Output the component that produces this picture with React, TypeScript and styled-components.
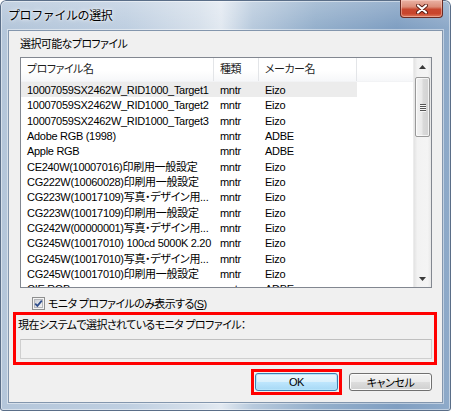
import React from "react";
import styled, { createGlobalStyle } from "styled-components";

const GlobalStyle = createGlobalStyle`
  html, body { margin: 0; padding: 0; background: #ffffff; }
  #root { width: 451px; height: 411px; }
`;

const uiFont = `"Liberation Sans", "Noto Sans CJK JP", sans-serif`;

const Window = styled.div`
  box-sizing: border-box;
  width: 451px;
  height: 411px;
  display: flex;
  flex-direction: column;
  padding: 0 8px 8px 8px;
  border-radius: 6px 6px 3px 3px;
  font-family: ${uiFont};
  color: #000;
  background:
    linear-gradient(180deg, rgba(255, 255, 255, 0.22) 0px, rgba(255, 255, 255, 0) 28px),
    linear-gradient(90deg, #b4c6da 0%, #bfcfe1 28%, #d6e0eb 44%, #e2e9f1 49%, #b8cadd 56%, #95b0cc 70%, #809fc2 88%, #8eaac9 100%);
  box-shadow: inset 0 0 0 1px #5a6e88, inset 0 0 0 2px rgba(255, 255, 255, 0.45);
`;

const TitleBar = styled.div`
  height: 30px;
  display: flex;
  justify-content: space-between;
  align-items: flex-start;
`;

const Title = styled.div`
  align-self: center;
  padding-bottom: 2px;
  font-size: 12px;
  letter-spacing: -0.4px;
  text-shadow: 0 0 5px rgba(255, 255, 255, 0.95), 0 0 2px rgba(255, 255, 255, 0.9);
`;

const CloseButton = styled.div`
  width: 43px;
  height: 18px;
  box-sizing: border-box;
  border: 1px solid #6b2a22;
  border-top: none;
  border-radius: 0 0 4px 4px;
  background: linear-gradient(180deg, #eab2a4 0%, #dc8d79 40%, #c8472f 55%, #c9452c 80%, #de7b5e 100%);
  box-shadow: inset 0 0 0 1px rgba(255, 220, 210, 0.45);
  display: flex;
  align-items: center;
  justify-content: center;
`;

const Client = styled.div`
  flex: 1;
  display: flex;
  flex-direction: column;
  background: #f0f0f0;
  border: 1px solid #8396ad;
  box-shadow: 0 0 0 1px rgba(255, 255, 255, 0.45);
`;

const Label = styled.div`
  font-size: 11px;
  line-height: 14px;
  letter-spacing: -0.6px;
  font-feature-settings: "palt" 1;
  white-space: nowrap;
`;

const SectionLabel = styled(Label)`
  margin: 6px 0 0 11px;
`;

const ListBox = styled.div`
  box-sizing: border-box;
  margin: 6px 0 0 11px;
  width: 412px;
  height: 231px;
  border: 1px solid #828790;
  background: #ffffff;
  display: flex;
  overflow: hidden;
`;

const ListMain = styled.div`
  flex: 1;
  display: flex;
  flex-direction: column;
  overflow: hidden;
`;

const cols = "193px 45px 98px 1fr";

const HeaderRow = styled.div`
  display: grid;
  grid-template-columns: ${cols};
  height: 24px;
  flex-shrink: 0;
  background: linear-gradient(180deg, #ffffff 0%, #ffffff 55%, #f6f7f9 100%);
  border-bottom: 1px solid #f2f3f5;
  box-sizing: border-box;
`;

const HeaderCell = styled.div<{ $last?: boolean }>`
  padding-left: 6px;
  font-size: 11px;
  line-height: 23px;
  letter-spacing: -0.5px;
  color: #1f1f1f;
  font-feature-settings: "palt" 1;
  border-right: ${(p) => (p.$last ? "none" : "1px solid #e3e5e8")};
  white-space: nowrap;
`;

const Row = styled.div`
  display: grid;
  grid-template-columns: ${cols};
  height: 15.35px;
  flex-shrink: 0;
`;

const Cell = styled.div<{ $selected?: boolean }>`
  padding-left: 6px;
  padding-top: 1px;
  font-size: 11px;
  line-height: 15px;
  letter-spacing: -0.3px;
  font-feature-settings: "palt" 1;
  white-space: nowrap;
  overflow: hidden;
  background: ${(p) => (p.$selected ? "#ececec" : "transparent")};
`;

const ScrollBar = styled.div`
  width: 17px;
  flex-shrink: 0;
  display: flex;
  flex-direction: column;
  background: linear-gradient(90deg, #e3e3e3 0%, #f2f2f2 20%, #f4f4f4 80%, #e8e8e8 100%);
  border-left: 1px solid #ececec;
`;

const ArrowButton = styled.div`
  height: 17px;
  flex-shrink: 0;
  display: flex;
  align-items: center;
  justify-content: center;
`;

const Track = styled.div`
  flex: 1;
  display: flex;
  flex-direction: column;
  align-items: center;
`;

const Thumb = styled.div`
  box-sizing: border-box;
  margin-top: 2px;
  width: 15px;
  height: 60px;
  border: 1px solid #999999;
  border-radius: 2px;
  background: linear-gradient(90deg, #f2f2f2 0%, #e9e9e9 45%, #d9d9d9 55%, #d2d2d2 100%);
  box-shadow: inset 0 0 0 1px rgba(255, 255, 255, 0.7);
  display: flex;
  flex-direction: column;
  align-items: center;
  justify-content: center;
  gap: 1px;
`;

const GripLine = styled.div`
  width: 6px;
  height: 1px;
  background: #555;
  box-shadow: 0 1px 0 #f8f8f8;
`;

const CheckRow = styled.label`
  margin: 9px 0 0 23px;
  height: 13px;
  display: flex;
  align-items: center;
  gap: 3px;
`;

const Group = styled.div`
  box-sizing: border-box;
  margin: 2px 0 0 4px;
  width: 424px;
  height: 53px;
  border: 3px solid #ff0000;
  padding: 3px 0 0 2px;
  display: flex;
  flex-direction: column;
`;

const Field = styled.div`
  box-sizing: border-box;
  margin: 7px 0 0 2px;
  width: 412px;
  height: 20px;
  background: #f1f1f1;
  border: 1px solid #cfcfcf;
  border-top-color: #bfbfbf;
`;

const ButtonRow = styled.div`
  margin-top: 4px;
  padding-right: 10px;
  display: flex;
  justify-content: flex-end;
  align-items: center;
  gap: 7px;
`;

const Highlight = styled.div`
  border: 3px solid #ff0000;
  padding: 1px;
  display: flex;
`;

const Button = styled.div<{ $primary?: boolean }>`
  box-sizing: border-box;
  width: 83px;
  height: 18px;
  border-radius: 3px;
  border: 1px solid ${(p) => (p.$primary ? "#3c7fb1" : "#707070")};
  background: ${(p) =>
    p.$primary
      ? "linear-gradient(180deg, #eaf6fd 0%, #d9f0fc 50%, #bee6fd 51%, #a7d9f5 100%)"
      : "linear-gradient(180deg, #f2f2f2 0%, #ebebeb 50%, #dddddd 51%, #cfcfcf 100%)"};
  box-shadow: inset 0 0 0 1px ${(p) => (p.$primary ? "#b6e3fa" : "#fbfbfb")};
  display: flex;
  align-items: center;
  justify-content: center;
  font-size: 11px;
  letter-spacing: -0.4px;
  font-feature-settings: "palt" 1;
`;

const Spacer = styled.div`
  flex: 1;
`;

const rows: [string, string, string][] = [
  ["10007059SX2462W_RID1000_Target1", "mntr", "Eizo"],
  ["10007059SX2462W_RID1000_Target2", "mntr", "Eizo"],
  ["10007059SX2462W_RID1000_Target3", "mntr", "Eizo"],
  ["Adobe RGB (1998)", "mntr", "ADBE"],
  ["Apple RGB", "mntr", "ADBE"],
  ["CE240W(10007016)印刷用一般設定", "mntr", "Eizo"],
  ["CG222W(10060028)印刷用一般設定", "mntr", "Eizo"],
  ["CG223W(10017109)写真・デザイン用...", "mntr", "Eizo"],
  ["CG223W(10017109)印刷用一般設定", "mntr", "Eizo"],
  ["CG242W(00000001)写真・デザイン用...", "mntr", "Eizo"],
  ["CG245W(10017010) 100cd 5000K 2.20", "mntr", "Eizo"],
  ["CG245W(10017010)写真・デザイン用...", "mntr", "Eizo"],
  ["CG245W(10017010)印刷用一般設定", "mntr", "Eizo"],
  ["CIE RGB", "mntr", "ADBE"],
];

const CloseGlyph = () => (
  <svg width="12" height="10" viewBox="0 0 12 10">
    <path d="M2 1.5 L10 8.5 M10 1.5 L2 8.5" stroke="#5a1d14" strokeWidth="4" strokeLinecap="round" />
    <path d="M2 1.5 L10 8.5 M10 1.5 L2 8.5" stroke="#ffffff" strokeWidth="2.2" strokeLinecap="round" />
  </svg>
);

const Arrow = ({ up }: { up?: boolean }) => (
  <svg width="7" height="4" viewBox="0 0 7 4">
    <polygon points={up ? "0,4 3.5,0 7,4" : "0,0 3.5,4 7,0"} fill="#3a3a3a" />
  </svg>
);

const CheckBox = () => (
  <svg width="13" height="13" viewBox="0 0 13 13">
    <defs>
      <linearGradient id="cbIn" x1="0" y1="0" x2="1" y2="1">
        <stop offset="0" stopColor="#cbcfd5" />
        <stop offset="1" stopColor="#f6f6f6" />
      </linearGradient>
    </defs>
    <rect x="0.5" y="0.5" width="12" height="12" fill="#f4f4f4" stroke="#8e8f8f" />
    <rect x="2.5" y="2.5" width="8" height="8" fill="url(#cbIn)" stroke="#b4b6ba" />
    <path d="M3.2 6.6 L5.4 8.9 L9.8 3.6" fill="none" stroke="#2e4d8c" strokeWidth="1.7" />
  </svg>
);

export default function App() {
  return (
    <>
      <GlobalStyle />
      <Window>
        <TitleBar>
          <Title>プロファイルの選択</Title>
          <CloseButton>
            <CloseGlyph />
          </CloseButton>
        </TitleBar>
        <Client>
          <SectionLabel>選択可能なプロファイル</SectionLabel>
          <ListBox>
            <ListMain>
              <HeaderRow>
                <HeaderCell>プロファイル名</HeaderCell>
                <HeaderCell>種類</HeaderCell>
                <HeaderCell>メーカー名</HeaderCell>
                <HeaderCell $last />
              </HeaderRow>
              {rows.map((r, i) => (
                <Row key={i}>
                  <Cell $selected={i === 0}>{r[0]}</Cell>
                  <Cell $selected={i === 0}>{r[1]}</Cell>
                  <Cell $selected={i === 0}>{r[2]}</Cell>
                </Row>
              ))}
            </ListMain>
            <ScrollBar>
              <ArrowButton>
                <Arrow up />
              </ArrowButton>
              <Track>
                <Thumb>
                  <GripLine />
                  <GripLine />
                  <GripLine />
                  <GripLine />
                </Thumb>
              </Track>
              <ArrowButton>
                <Arrow />
              </ArrowButton>
            </ScrollBar>
          </ListBox>
          <CheckRow>
            <CheckBox />
            <Label>
              モニタ プロファイルのみ表示する(<u>S</u>)
            </Label>
          </CheckRow>
          <Group>
            <Label>現在システムで選択されているモニタ プロファイル：</Label>
            <Field />
          </Group>
          <ButtonRow>
            <Highlight>
              <Button $primary>OK</Button>
            </Highlight>
            <Button>キャンセル</Button>
          </ButtonRow>
          <Spacer />
        </Client>
      </Window>
    </>
  );
}
